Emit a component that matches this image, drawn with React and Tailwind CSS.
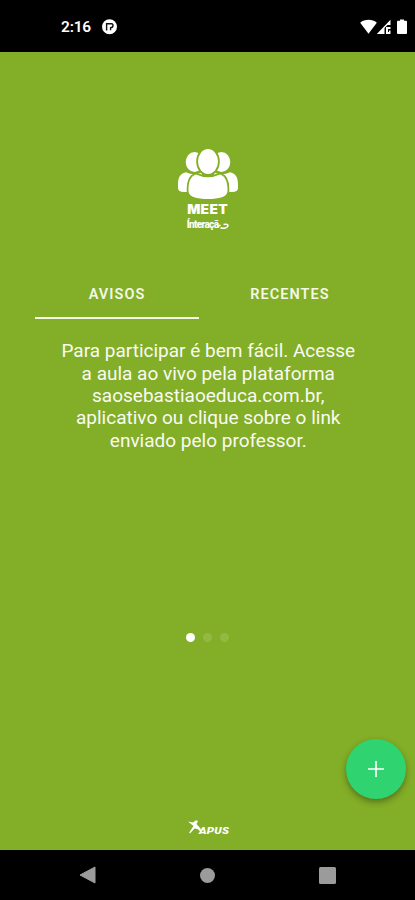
function StatusBar() {
  return (
    <header className="flex h-[52px] shrink-0 items-start bg-black pt-[19px] pr-[6px] pl-[61px] text-white">
      <span className="h-4 w-[30px] text-[15.5px] leading-[17px] font-semibold tracking-[-0.2px]">2:16</span>
      <svg className="ml-[11px] h-4 w-4" viewBox="0 0 16 16">
        <circle cx="7.5" cy="7.8" r="7.5" fill="#fff" />
        <path d="M4.600 11.500V4.800H9.500Q11.300 5 11 7Q10.700 8.600 8.600 8.600V11.300" fill="none" stroke="#111" strokeWidth="1.400" />
      </svg>
      <div className="flex-1" />
      <svg className="h-4 w-[50px]" viewBox="0 0 50 16" fill="#fff">
        <path d="M1.2 3.7C5.6-.1 13.400-.1 17.800 3.700L9.500 14.700z" />
        <path d="M17.800 15L31.500.8V6H28.500L25.500 9v6z" />
        <path d="M27 8h4.500v2H29v3h1v-1.500h1.500V15H27z" />
        <path d="M41 1.700V.4h4v1.300h2q1 0 1 1V14q0 1-1 1h-8q-1 0-1-1V2.700q0-1 1-1z" />
      </svg>
    </header>
  );
}

function MeetLogo() {
  return (
    <div className="flex h-[88px] flex-col items-center text-white">
      <svg className="h-[52px] w-[64px] shrink-0" viewBox="0 0 64 52" fill="#fff">
        <ellipse cx="18.500" cy="13" rx="8.800" ry="10" />
        <ellipse cx="45.500" cy="13" rx="8.800" ry="10" />
        <path d="M2 39V35C2 28 5 24 10 23.300Q18 27 26 23.300V43H8Q2 43 2 39z" />
        <path d="M62 39V35C62 28 59 24 54 23.300Q46 27 38 23.300V43H56Q62 43 62 39z" />
        <g stroke="#83ae27" strokeWidth="3.600" paintOrder="stroke">
          <path d="M20 25.500Q32 31 44 25.500C49 27 51.500 32.500 51.500 40V42C51.500 48 43 50 32 50S12.500 48 12.500 42V40C12.500 32.500 15 27 20 25.500z" />
          <ellipse cx="32" cy="12.500" rx="10" ry="12.500" />
        </g>
      </svg>
      <span className="mt-[2px] h-[13px] origin-center scale-x-110 font-['Inter'] text-[12.5px] leading-[14px] font-black tracking-[0.3px]">
        MEET
      </span>
      <div className="mt-[3px] flex h-3 items-center pl-px">
        <span className="text-[10px] leading-3 font-extrabold tracking-[-0.65px]">Ínteraçã</span>
        <svg className="mt-[2px] h-[7px] w-[11px]" viewBox="0 0 11 7" fill="none" stroke="#fff" strokeWidth="1.500">
          <path d="M0 3.500L2.500 2M5.500 1.500C8.500 .5 10.500 1.800 9.800 3.300S6 6 2.500 4.800" />
        </svg>
      </div>
    </div>
  );
}

function Tabs() {
  return (
    <nav className="mt-[32px] flex h-[50px] w-[345px] text-[14.500px] font-semibold tracking-[1.05px] text-[#f3f8e8]">
      <div className="flex w-[164px] items-center justify-center border-b-2 border-[#f3f8e8] pt-[3px]">AVISOS</div>
      <div className="flex w-[181px] items-center justify-center pt-px pl-px">RECENTES</div>
    </nav>
  );
}

function ApusLogo() {
  return (
    <div className="flex h-4 w-[42px] items-end text-white">
      <svg className="h-4 w-[16px] shrink-0" viewBox="0 0 16 16" fill="#fff">
        <path d="M1 2.500L6 3.500 9 1.200 11 2 9.500 5 13.500 9.500 14.500 13.500 10.500 10 7.500 9.500 3 14.500 2.200 13.500 6.500 7z" />
      </svg>
      <span className="-ml-[4px] origin-left translate-y-px scale-x-[1.35] text-[8.500px] leading-[9px] font-black tracking-[0.2px] italic">
        APUS
      </span>
    </div>
  );
}

export default function App() {
  return (
    <div className="flex h-[900px] w-[415px] flex-col overflow-hidden bg-black font-['Roboto',sans-serif]">
      <StatusBar />
      <main className="flex h-[798px] shrink-0 flex-col items-center bg-[#83ae27] pt-[97px]">
        <MeetLogo />
        <Tabs />
        <p className="mt-[21px] h-[112px] pt-[0.400px] pl-[1.500px] text-center text-[19px] leading-[22.300px] text-[#f9fbf3]">
          Para participar é bem fácil. Acesse
          <br />a aula ao vivo pela plataforma
          <br />saosebastiaoeduca.com.br,
          <br />aplicativo ou clique sobre o link
          <br />enviado pelo professor.
        </p>
        <div className="mt-[181px] flex h-[9px] items-center gap-[8px]">
          <span className="h-[9px] w-[9px] rounded-full bg-white" />
          <span className="h-[9px] w-[9px] rounded-full bg-[#92b941]" />
          <span className="h-[9px] w-[9px] rounded-full bg-[#92b941]" />
        </div>
        <button className="mt-[97px] mr-[9px] flex h-[60px] w-[60px] items-center justify-center self-end rounded-full bg-[#2fd36f] shadow-[0_3px_6px_rgba(0,0,0,0.35)]">
          <svg className="h-4 w-4" viewBox="0 0 16 16" stroke="#fff" strokeWidth="1.700">
            <path d="M8 0v16M0 8h16" />
          </svg>
        </button>
        <div className="mt-[20px] pl-px">
          <ApusLogo />
        </div>
      </main>
      <footer className="flex h-[50px] shrink-0 items-center justify-between pr-[79px] pl-[79px]">
        <svg className="h-[18px] w-[17px]" viewBox="0 0 17 18">
          <path d="M1 9L16 1v16z" fill="#9b9b9b" stroke="#9b9b9b" strokeLinejoin="round" />
        </svg>
        <span className="h-[15px] w-[15px] rounded-full bg-[#9b9b9b]" />
        <span className="h-[17px] w-[17px] rounded-[1.500px] bg-[#9b9b9b]" />
      </footer>
    </div>
  );
}
